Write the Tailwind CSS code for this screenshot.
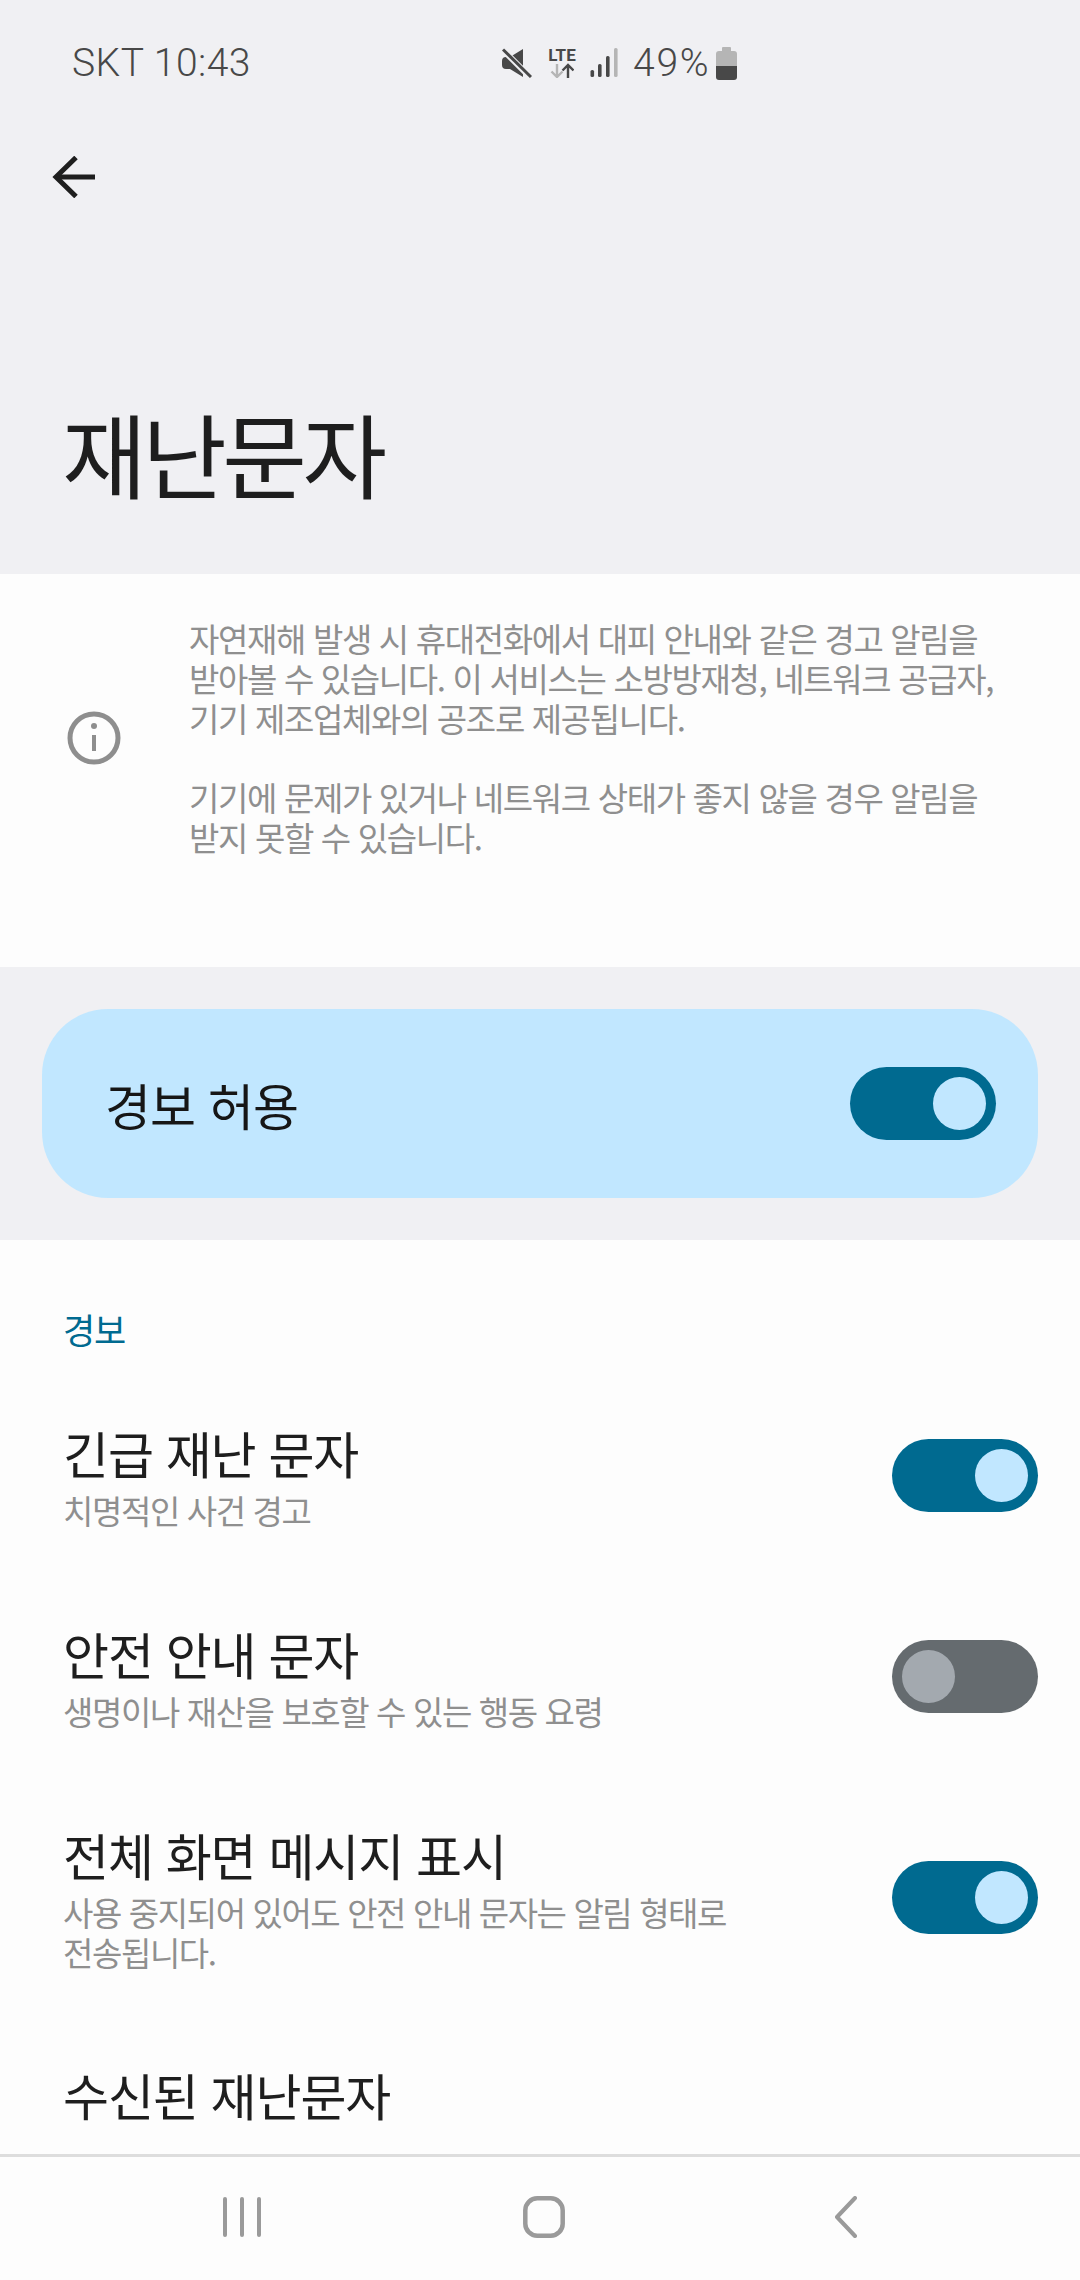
<!DOCTYPE html>
<html lang="ko">
<head>
  <meta charset="UTF-8" />
  <meta name="viewport" content="width=device-width, initial-scale=1" />
  <title>재난문자</title>
  <script src="https://cdn.jsdelivr.net/npm/@tailwindcss/browser@4"></script>
</head>
<body class="bg-[#f0f0f3] font-['Roboto','Noto_Sans_CJK_KR',sans-serif]">
<div class="w-[1080px] h-[2280px] flex flex-col overflow-hidden">

  <!-- Scroll area -->
  <div class="h-[2154px] overflow-hidden shrink-0">

    <!-- Status bar -->
    <div class="h-[124px] pl-[72px] pt-[39px] flex items-start text-[#484848]">
      <span class="w-[430px] text-[39px] leading-[48px] font-light tracking-[0.5px]">SKT 10:43</span>
      <div class="flex items-start h-[48px] pt-[9px]">
        <svg class="w-[30px] h-[30px]" viewBox="0 0 30 30" fill="#484848">
          <path d="M0 13q0-4 4-4h4L21 1v28L8 21H4q-4 0-4-4z"/>
          <path d="M0 1l30 30" stroke="#f0f0f3" stroke-width="6"/>
          <path d="M1 1.5l28 27.5" stroke="#484848" stroke-width="3"/>
        </svg>
        <div class="ml-[15px] w-[30px] h-[30px] flex flex-col items-center">
          <span class="text-[17px] leading-[15px] font-bold text-[#484848] font-['Roboto',sans-serif]">LTE</span>
          <svg class="w-[24px] h-[15px]" viewBox="0 0 24 15" fill="none" stroke-width="2.4">
            <path d="M7 1v13M1.5 8.5 7 14l5.5-5.5" stroke="#b5b5b5"/>
            <path d="M18 15V2M12.5 7.5 18 2l5.5 5.5" stroke="#484848"/>
          </svg>
        </div>
        <svg class="w-[28px] h-[30px] ml-[13px]" viewBox="0 0 28 30">
          <rect x="0.5" y="22" width="3.6" height="7" rx="1.6" fill="#484848"/>
          <rect x="8" y="16" width="3.6" height="13" rx="1.6" fill="#484848"/>
          <rect x="16" y="8" width="3.6" height="21" rx="1.6" fill="#484848"/>
          <rect x="24" y="0" width="3.6" height="29" rx="1.6" fill="#b5b5b5"/>
        </svg>
        <span class="ml-[15px] -mt-[9px] text-[39px] leading-[48px] font-light tracking-[1.8px]">49%</span>
        <svg class="w-[21px] h-[33px] ml-[5px] -mt-[1px]" viewBox="0 0 21 33">
          <path d="M7 0h7a1 1 0 0 1 1 1v3h3a3 3 0 0 1 3 3v12H0V7a3 3 0 0 1 3-3h3V1a1 1 0 0 1 1-1z" fill="#b5b5b5"/>
          <path d="M0 19h21v11a3 3 0 0 1-3 3H3a3 3 0 0 1-3-3z" fill="#484848"/>
        </svg>
      </div>
    </div>

    <!-- App bar -->
    <div class="h-[106px] pl-[52px] pt-[32px]">
      <svg class="w-[44px] h-[42px]" viewBox="0 0 44 42" fill="none" stroke="#1e1e1e" stroke-width="5">
        <path d="M43 21H4"/>
        <path d="M24 1.5 4 21l20 19.5"/>
      </svg>
    </div>

    <!-- Title -->
    <div class="h-[344px] pl-[62px] pt-[170px]">
      <h1 class="text-[92px] leading-[104px] font-normal text-[#1e1e1e] font-['Noto_Sans_CJK_KR',sans-serif] tracking-[-4.5px]">재난문자</h1>
    </div>

    <!-- Info block -->
    <div class="h-[393px] bg-[#fdfdfd] flex items-start">
      <div class="w-[189px] pl-[67px] pt-[137px] shrink-0">
        <svg class="w-[54px] h-[54px]" viewBox="0 0 54 54" fill="none" stroke="#8e8e8e">
          <circle cx="27" cy="27" r="24" stroke-width="5"/>
          <path d="M27 24v16" stroke-width="4"/>
          <circle cx="27" cy="15" r="3" fill="#8e8e8e" stroke="none"/>
        </svg>
      </div>
      <div class="pt-[44px] text-[33px] leading-[40px] font-normal text-[#8f8f8f] font-['Noto_Sans_CJK_KR',sans-serif] tracking-[-1.35px] whitespace-nowrap">
        <p>자연재해 발생 시 휴대전화에서 대피 안내와 같은 경고 알림을</p>
        <p>받아볼 수 있습니다. 이 서비스는 소방방재청, 네트워크 공급자,</p>
        <p>기기 제조업체와의 공조로 제공됩니다.</p>
        <p class="mt-[39px]">기기에 문제가 있거나 네트워크 상태가 좋지 않을 경우 알림을</p>
        <p>받지 못할 수 있습니다.</p>
      </div>
    </div>

    <!-- Master switch -->
    <div class="h-[273px] px-[42px] pt-[42px]">
      <div class="h-[189px] rounded-[66px] bg-[#c1e7ff] flex items-center justify-between pl-[63px] pr-[42px]">
        <span class="text-[50px] leading-[60px] text-[#161616] font-['Noto_Sans_CJK_KR',sans-serif] tracking-[-1px]">경보 허용</span>
        <div class="w-[146px] h-[73px] rounded-full bg-[#006a90] flex items-center justify-end pr-[10px]">
          <div class="w-[53px] h-[53px] rounded-full bg-[#c1e7ff]"></div>
        </div>
      </div>
    </div>

    <!-- Settings list -->
    <div class="h-[914px] bg-[#fdfdfd] px-[42px] font-['Noto_Sans_CJK_KR',sans-serif]">
      <p class="pl-[21px] pt-[67px] h-[180px] text-[35px] leading-[44px] text-[#006a90] tracking-[-1.2px]">경보</p>

      <div class="h-[201px] flex items-start justify-between">
        <div class="pl-[21px]">
          <p class="text-[50px] leading-[64px] text-[#1e1e1e] tracking-[-1.1px]">긴급 재난 문자</p>
          <p class="mt-[6px] text-[33px] leading-[40px] font-normal text-[#8f8f8f] tracking-[-1.4px]">치명적인 사건 경고</p>
        </div>
        <div class="mt-[19px] w-[146px] h-[73px] rounded-full bg-[#006a90] flex items-center justify-end pr-[10px]">
          <div class="w-[53px] h-[53px] rounded-full bg-[#c1e7ff]"></div>
        </div>
      </div>

      <div class="h-[201px] flex items-start justify-between">
        <div class="pl-[21px]">
          <p class="text-[50px] leading-[64px] text-[#1e1e1e] tracking-[-1.1px]">안전 안내 문자</p>
          <p class="mt-[6px] text-[33px] leading-[40px] font-normal text-[#8f8f8f] tracking-[-1.4px]">생명이나 재산을 보호할 수 있는 행동 요령</p>
        </div>
        <div class="mt-[19px] w-[146px] h-[73px] rounded-full bg-[#656b6f] flex items-center pl-[10px]">
          <div class="w-[53px] h-[53px] rounded-full bg-[#a3a9af]"></div>
        </div>
      </div>

      <div class="h-[240px] flex items-start justify-between">
        <div class="pl-[21px]">
          <p class="text-[50px] leading-[64px] text-[#1e1e1e] tracking-[-1.1px]">전체 화면 메시지 표시</p>
          <p class="mt-[6px] text-[33px] leading-[40px] font-normal text-[#8f8f8f] tracking-[-1.4px] whitespace-nowrap">사용 중지되어 있어도 안전 안내 문자는 알림 형태로<br />전송됩니다.</p>
        </div>
        <div class="mt-[39px] w-[146px] h-[73px] rounded-full bg-[#006a90] flex items-center justify-end pr-[10px]">
          <div class="w-[53px] h-[53px] rounded-full bg-[#c1e7ff]"></div>
        </div>
      </div>

      <p class="pl-[21px] text-[50px] leading-[64px] text-[#1e1e1e] tracking-[-1.1px]">수신된 재난문자</p>
    </div>
  </div>

  <!-- Navigation bar -->
  <div class="h-[126px] bg-[#fdfdfd] border-t-[3px] border-[#dddddd] flex items-start shrink-0">
    <div class="pl-[222px] pt-[40px] w-[523px] flex">
      <svg class="w-[40px] h-[40px]" viewBox="0 0 40 40" fill="#9a9a9a">
        <rect x="1" y="0" width="4" height="40" rx="2"/>
        <rect x="18" y="0" width="4" height="40" rx="2"/>
        <rect x="35" y="0" width="4" height="40" rx="2"/>
      </svg>
    </div>
    <svg class="w-[42px] h-[42px] mt-[39px]" viewBox="0 0 42 42" fill="none" stroke="#9a9a9a" stroke-width="4.5">
      <rect x="2.3" y="2.3" width="37.4" height="37.4" rx="12"/>
    </svg>
    <svg class="w-[24px] h-[42px] ml-[269px] mt-[39px]" viewBox="0 0 24 42" fill="none" stroke="#9a9a9a" stroke-width="4" stroke-linecap="round" stroke-linejoin="round">
      <path d="M21 2 3 21l18 19"/>
    </svg>
  </div>
</div>
</body>
</html>
